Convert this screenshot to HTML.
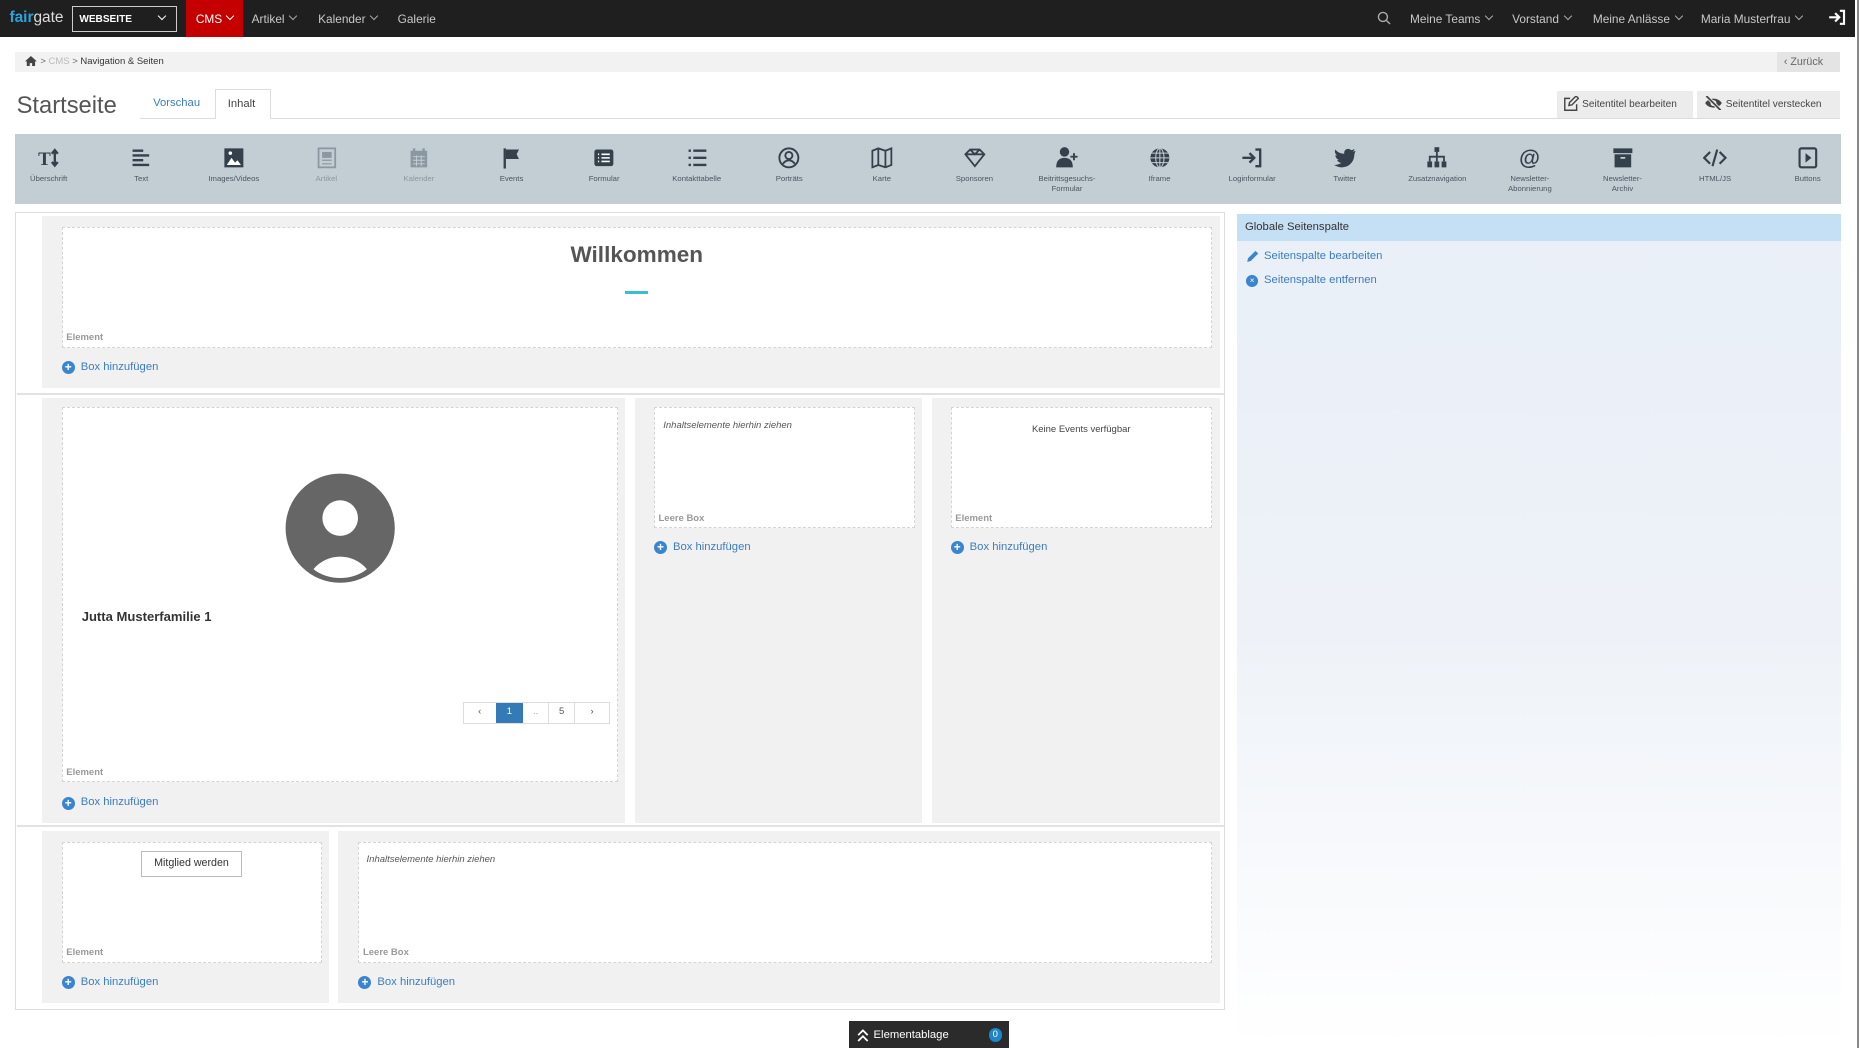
<!DOCTYPE html>
<html><head><meta charset="utf-8">
<style>
*{box-sizing:border-box;margin:0;padding:0}
html,body{width:1861px;height:1048px;overflow:hidden;background:#fff}
#w{zoom:1.1869;width:1568px;height:883px;position:relative;font-family:"Liberation Sans",sans-serif;color:#333}
.a{position:absolute;white-space:nowrap}
.nav{left:0;top:0;width:1563px;height:31px;background:#1f1f1f}
.nt{color:#c8c8c8;font-size:10px;top:10px}
.chev{display:inline-block;width:5px;height:5px;border-right:1px solid #aaa;border-bottom:1px solid #aaa;transform:rotate(45deg);margin-left:5px;position:relative;top:-3px}
.tb{left:13px;top:113px;width:1538px;height:59px;background:#c3cdd4}
.ti{position:absolute;top:10px;width:78px;text-align:center;font-size:6.5px;color:#4a5560;line-height:8px;white-space:nowrap}
.ti svg{display:block;margin:0 auto 4px;width:20px;height:20px}
.gray{background:#f1f1f1}
.dash{background:#fff;border:1px dashed #d4d4d4}
.lbl{font-size:8px;color:#999;font-weight:bold;position:absolute;left:3px;bottom:3px}
.add{font-size:9.5px;color:#3a7dc0}
.add i{display:inline-block;width:11px;height:11px;border-radius:50%;background:#3a85cf;color:#fff;font-style:normal;font-size:10px;line-height:11px;text-align:center;margin-right:5px;vertical-align:-1px;font-weight:bold}
.it{font-size:8px;font-style:italic;color:#555}
</style></head><body><div id="w">
<div class="a nav"></div>
<div class="a" style="left:8px;top:8px;font-size:13px;color:#ddd"><b style="color:#2aa3dc;font-weight:bold">fair</b>gate</div>
<div class="a" style="left:61px;top:5px;width:88px;height:22px;border:1px solid #ccc;color:#fff;font-size:8.5px;font-weight:bold;padding:6px 5px">WEBSEITE<span style="position:absolute;right:9px;top:5px;width:5px;height:5px;border-right:1.5px solid #fff;border-bottom:1.5px solid #fff;transform:rotate(45deg)"></span></div>
<div class="a" style="left:157px;top:0;width:48px;height:31px;background:#c40000;color:#fff;font-size:10px;padding:10px 0 0 8px">CMS<span class="chev" style="border-color:#fff;border-width:0 1.5px 1.5px 0;margin-left:4px"></span></div>
<div class="a nt" style="left:212px">Artikel<span class="chev"></span></div>
<div class="a nt" style="left:268px">Kalender<span class="chev"></span></div>
<div class="a nt" style="left:335px">Galerie</div>
<svg class="a" style="left:1160px;top:9px" width="12" height="12" viewBox="0 0 12 12"><circle cx="5" cy="5" r="3.8" fill="none" stroke="#aaa" stroke-width="1.2"/><path d="M8 8l3 3" stroke="#aaa" stroke-width="1.2"/></svg>
<div class="a nt" style="left:1188px">Meine Teams<span class="chev"></span></div>
<div class="a nt" style="left:1274px">Vorstand<span class="chev"></span></div>
<div class="a nt" style="left:1342px">Meine Anlässe<span class="chev"></span></div>
<div class="a nt" style="left:1433px">Maria Musterfrau<span class="chev"></span></div>
<svg class="a" style="left:1540px;top:8px" width="15" height="14" viewBox="0 0 15 14"><path d="M1 7h8M6 3.5L9.5 7 6 10.5M10 1.5h3.5v11H10" fill="none" stroke="#fff" stroke-width="1.8"/></svg>
<div class="a" style="left:1565px;top:0;width:1px;height:883px;background:#888"></div>

<div class="a" style="left:13px;top:44px;width:1537px;height:17px;background:#f2f2f2"></div>
<svg class="a" style="left:21px;top:47px" width="10" height="9" viewBox="0 0 10 9"><path d="M5 0L0 4.5h1.5V9h2.5V6h2v3h2.5V4.5H10z" fill="#444"/></svg>
<div class="a" style="left:34px;top:47px;font-size:8px;color:#666">&gt; <span style="color:#bbb">CMS</span> &gt; <span style="color:#333">Navigation &amp; Seiten</span></div>
<div class="a" style="left:1497px;top:44px;width:53px;height:17px;background:#e4e4e4;font-size:9px;color:#666;padding:3px 6px">‹ Zurück</div>

<div class="a" style="left:14px;top:78px;font-size:20px;color:#555">Startseite</div>
<div class="a" style="left:118px;top:99px;width:1432px;height:1px;background:#ddd"></div>
<div class="a" style="left:129px;top:82px;font-size:9.5px;color:#3a7dc0">Vorschau</div>
<div class="a" style="left:181px;top:75px;width:47px;height:25px;background:#fff;border:1px solid #ddd;border-bottom:none;font-size:9.5px;color:#444;padding:7px 10px">Inhalt</div>
<div class="a" style="left:1312px;top:77px;width:114px;height:22px;background:#ececec;font-size:8.5px;color:#444;padding:6px 5px 0 21px">Seitentitel bearbeiten</div>
<svg class="a" style="left:1317px;top:81px" width="13" height="13" viewBox="0 0 13 13"><path d="M6 2H1.5v10h10V7M5 8l.5-2.5L11 0l2 2-5.5 5.5z" fill="none" stroke="#444" stroke-width="1.2"/></svg>
<div class="a" style="left:1430px;top:77px;width:120px;height:22px;background:#ececec;font-size:8.5px;color:#444;padding:6px 5px 0 24px">Seitentitel verstecken</div>
<svg class="a" style="left:1436px;top:81px" width="16" height="12" viewBox="0 0 16 12"><path d="M1 6c3-5 11-5 14 0c-3 5-11 5-14 0z" fill="#444"/><circle cx="8" cy="6" r="2.5" fill="#ececec"/><path d="M2 0l12 12" stroke="#ececec" stroke-width="3"/><path d="M2 0l12 12" stroke="#444" stroke-width="1.5"/></svg>

<div class="a tb">
<div class="ti" style="left:-11px"><svg viewBox="0 0 20 20"><text x="1" y="16" font-family="Liberation Serif" font-weight="bold" font-size="16" fill="#34404b">T</text><path d="M15 4v12M12.5 6.5L15 3.5l2.5 3M12.5 13.5L15 16.5l2.5-3" stroke="#34404b" stroke-width="2" fill="none"/></svg>Überschrift</div>
<div class="ti" style="left:67px"><svg viewBox="0 0 20 20"><path d="M3 4h9M3 8h14M3 12h9M3 16h14" stroke="#34404b" stroke-width="2"/></svg>Text</div>
<div class="ti" style="left:145px"><svg viewBox="0 0 20 20"><rect x="2" y="2" width="16" height="16" fill="#34404b"/><path d="M4 16l4-6 3 4 2-2 3 4z" fill="#fff"/><circle cx="7" cy="6" r="1.5" fill="#fff"/></svg>Images/Videos</div>
<div class="ti" style="left:223px;color:#8b97a1"><svg viewBox="0 0 20 20"><rect x="3" y="2" width="14" height="16" fill="none" stroke="#8b97a1" stroke-width="1.5"/><rect x="6" y="5" width="8" height="5" fill="#8b97a1"/><path d="M6 12h8M6 15h8" stroke="#8b97a1"/></svg>Artikel</div>
<div class="ti" style="left:301px;color:#8b97a1"><svg viewBox="0 0 20 20"><rect x="3" y="4" width="14" height="14" fill="#8b97a1"/><path d="M6 2v4M14 2v4" stroke="#8b97a1" stroke-width="2"/><path d="M5 9h10M5 12h10M5 15h10M8 8v9M12 8v9" stroke="#c3cdd4" stroke-width=".8"/></svg>Kalender</div>
<div class="ti" style="left:379px"><svg viewBox="0 0 20 20"><path d="M4 2v17" stroke="#34404b" stroke-width="2"/><path d="M5 3h11l-2 4 2 4H5z" fill="#34404b"/></svg>Events</div>
<div class="ti" style="left:457px"><svg viewBox="0 0 20 20"><rect x="2" y="3" width="16" height="14" rx="2" fill="#34404b"/><path d="M5 7h1M8 7h7M5 10h1M8 10h7M5 13h1M8 13h7" stroke="#fff" stroke-width="1.3"/></svg>Formular</div>
<div class="ti" style="left:535px"><svg viewBox="0 0 20 20"><path d="M3 4h2M7 4h11M3 10h2M7 10h11M3 16h2M7 16h11" stroke="#34404b" stroke-width="2"/></svg>Kontakttabelle</div>
<div class="ti" style="left:613px"><svg viewBox="0 0 20 20"><circle cx="10" cy="10" r="8" fill="none" stroke="#34404b" stroke-width="1.6"/><circle cx="10" cy="8" r="3" fill="none" stroke="#34404b" stroke-width="1.6"/><path d="M5 15c3-4 7-4 10 0" fill="none" stroke="#34404b" stroke-width="1.6"/></svg>Porträts</div>
<div class="ti" style="left:691px"><svg viewBox="0 0 20 20"><path d="M2 4l5-2 6 2 5-2v14l-5 2-6-2-5 2zM7 2v14M13 4v14" fill="none" stroke="#34404b" stroke-width="1.5"/></svg>Karte</div>
<div class="ti" style="left:769px"><svg viewBox="0 0 20 20"><path d="M2 7l4-4h8l4 4-8 10zM2 7h16M6 3l4 4 4-4" fill="none" stroke="#34404b" stroke-width="1.5"/></svg>Sponsoren</div>
<div class="ti" style="left:847px"><svg viewBox="0 0 20 20"><circle cx="8" cy="5" r="4" fill="#34404b"/><path d="M1 18c0-6 3-8 7-8s7 2 7 8z" fill="#34404b"/><path d="M16 6v6M13 9h6" stroke="#34404b" stroke-width="1.6"/></svg>Beitrittsgesuchs-<br>Formular</div>
<div class="ti" style="left:925px"><svg viewBox="0 0 20 20"><circle cx="10" cy="10" r="8" fill="#34404b"/><path d="M10 2v16M2 10h16M3 6h14M3 14h14" stroke="#c3cdd4" stroke-width=".9"/><ellipse cx="10" cy="10" rx="3.5" ry="8" fill="none" stroke="#c3cdd4" stroke-width=".9"/></svg>Iframe</div>
<div class="ti" style="left:1003px"><svg viewBox="0 0 20 20"><path d="M2 10h9M8 6l4 4-4 4M13 3h4v14h-4" fill="none" stroke="#34404b" stroke-width="2"/></svg>Loginformular</div>
<div class="ti" style="left:1081px"><svg viewBox="0 0 20 20"><path d="M19 4c-1 .5-2 .7-2.5.7C18 4 18 3 18 2.5c-1 .6-2 1-2.7 1-2.5-2.5-6.5-.5-5.8 3C6 6.5 3.5 5 2 3c-1 2 0 4 1.5 5-1 0-1.5-.3-1.5-.3 0 2 1.5 3.5 3 4-1 .3-1.5 0-1.5 0 .5 1.5 2 2.5 3.5 2.5C5 15.5 3 16 1 16c8 5 17 0 17-9z" fill="#34404b"/></svg>Twitter</div>
<div class="ti" style="left:1159px"><svg viewBox="0 0 20 20"><rect x="8" y="1" width="4" height="4" fill="#34404b"/><path d="M10 5v4M4 13V9h12v4M10 9v4" fill="none" stroke="#34404b" stroke-width="1.5"/><rect x="2" y="13" width="4" height="5" fill="#34404b"/><rect x="8" y="13" width="4" height="5" fill="#34404b"/><rect x="14" y="13" width="4" height="5" fill="#34404b"/></svg>Zusatznavigation</div>
<div class="ti" style="left:1237px"><svg viewBox="0 0 20 20"><text x="1" y="16" font-family="Liberation Sans" font-weight="bold" font-size="18" fill="#34404b">@</text></svg>Newsletter-<br>Abonnierung</div>
<div class="ti" style="left:1315px"><svg viewBox="0 0 20 20"><rect x="2" y="2" width="16" height="4" fill="#34404b"/><rect x="3" y="7" width="14" height="11" fill="#34404b"/><path d="M8 10h4" stroke="#c3cdd4" stroke-width="1.5"/></svg>Newsletter-<br>Archiv</div>
<div class="ti" style="left:1393px"><svg viewBox="0 0 20 20"><path d="M6 5L1 10l5 5M14 5l5 5-5 5M12 3L8 17" fill="none" stroke="#34404b" stroke-width="1.8"/></svg>HTML/JS</div>
<div class="ti" style="left:1471px"><svg viewBox="0 0 20 20"><rect x="3" y="2" width="14" height="16" rx="1.5" fill="none" stroke="#34404b" stroke-width="1.8"/><path d="M8 6l5 4-5 4z" fill="#34404b"/></svg>Buttons</div>
</div>

<div class="a" style="left:13px;top:179px;width:1019px;height:672px;border:1px solid #ddd"></div>
<div class="a" style="left:14px;top:331px;width:1017px;height:2px;background:#e2e2e2"></div>
<div class="a" style="left:14px;top:695px;width:1017px;height:2px;background:#e2e2e2"></div>

<div class="a gray" style="left:35px;top:182px;width:993px;height:145px"></div>
<div class="a dash" style="left:52px;top:191px;width:969px;height:102px"><div class="a" style="left:0;right:0;top:12px;text-align:center;font-size:19px;font-weight:bold;color:#555">Willkommen</div><div class="a" style="left:474px;top:53px;width:19px;height:3px;background:#3bbfcf"></div><div class="lbl">Element</div></div>
<div class="a add" style="left:52px;top:304px"><i>+</i>Box hinzufügen</div>

<div class="a gray" style="left:35px;top:335px;width:492px;height:358px"></div>
<div class="a dash" style="left:52px;top:343px;width:469px;height:316px"><svg class="a" style="left:187px;top:55px" width="93" height="93" viewBox="0 0 93 93"><circle cx="46.5" cy="46.5" r="46" fill="#666"/><circle cx="46.5" cy="38" r="15" fill="#fff"/><path d="M24 81c12-14 33-14 45 0c-12 10-33 10-45 0z" fill="#fff"/></svg><div class="a" style="left:16px;top:169px;font-size:11px;font-weight:bold;color:#333">Jutta Musterfamilie 1</div>
<div class="a" style="left:337px;top:248px;width:124px;height:18px;border:1px solid #ddd;font-size:8px;display:flex;background:#fff"><span style="width:27px;text-align:center;line-height:16px;color:#555">‹</span><span style="width:23px;background:#337ab7;color:#fff;text-align:center;line-height:16px">1</span><span style="width:22px;text-align:center;line-height:16px;border-right:1px solid #ddd;color:#999">..</span><span style="width:22px;text-align:center;line-height:16px;border-right:1px solid #ddd;color:#555">5</span><span style="flex:1;text-align:center;line-height:16px;color:#555">›</span></div>
<div class="lbl">Element</div></div>
<div class="a add" style="left:52px;top:671px"><i>+</i>Box hinzufügen</div>

<div class="a gray" style="left:535px;top:335px;width:242px;height:358px"></div>
<div class="a dash" style="left:551px;top:343px;width:220px;height:102px"><div class="a it" style="left:7px;top:10px">Inhaltselemente hierhin ziehen</div><div class="lbl">Leere Box</div></div>
<div class="a add" style="left:551px;top:456px"><i>+</i>Box hinzufügen</div>

<div class="a gray" style="left:785px;top:335px;width:243px;height:358px"></div>
<div class="a dash" style="left:801px;top:343px;width:220px;height:102px"><div class="a" style="left:0;right:0;top:13px;text-align:center;font-size:8px;color:#444">Keine Events verfügbar</div><div class="lbl">Element</div></div>
<div class="a add" style="left:801px;top:456px"><i>+</i>Box hinzufügen</div>

<div class="a gray" style="left:35px;top:700px;width:242px;height:145px"></div>
<div class="a dash" style="left:52px;top:709px;width:219px;height:102px"><div class="a" style="left:66px;top:7px;width:85px;height:22px;border:1px solid #bbb;background:#fff;font-size:9px;color:#333;text-align:center;line-height:20px">Mitglied werden</div><div class="lbl">Element</div></div>
<div class="a add" style="left:52px;top:822px"><i>+</i>Box hinzufügen</div>

<div class="a gray" style="left:285px;top:700px;width:743px;height:145px"></div>
<div class="a dash" style="left:302px;top:709px;width:719px;height:102px"><div class="a it" style="left:6px;top:10px">Inhaltselemente hierhin ziehen</div><div class="lbl">Leere Box</div></div>
<div class="a add" style="left:302px;top:822px"><i>+</i>Box hinzufügen</div>

<div class="a" style="left:1042px;top:180px;width:509px;height:703px;background:linear-gradient(#e9eff8,#eef2f8 50%,#fff)"></div>
<div class="a" style="left:1042px;top:180px;width:509px;height:23px;background:#c5dff4;font-size:9.5px;color:#333;padding:6px 7px">Globale Seitenspalte</div>
<svg class="a" style="left:1050px;top:211px" width="11" height="11" viewBox="0 0 11 11"><path d="M1 10l.7-3L8 .7 10.3 3 4 9.3z" fill="#3a85cf"/></svg>
<div class="a" style="left:1065px;top:211px;font-size:9.5px;color:#3a7dc0">Seitenspalte bearbeiten</div>
<div class="a" style="left:1050px;top:232px;width:10px;height:10px;border-radius:50%;background:#3a85cf;color:#fff;font-size:7px;text-align:center;line-height:10px">×</div>
<div class="a" style="left:1065px;top:231px;font-size:9.5px;color:#3a7dc0">Seitenspalte entfernen</div>

<div class="a" style="left:715px;top:860px;width:135px;height:23px;background:#2b2b2b;color:#fff;font-size:9.5px;padding:7px 0 0 21px">Elementablage</div>
<svg class="a" style="left:722px;top:866px" width="10" height="12" viewBox="0 0 10 12"><path d="M1 6l4-4 4 4M1 11l4-4 4 4" fill="none" stroke="#fff" stroke-width="1.5"/></svg>
<div class="a" style="left:833px;top:866px;width:11px;height:12px;border-radius:6px;background:#1d86c8;color:#fff;font-size:8px;text-align:center;line-height:12px">0</div>
</div></body></html>
